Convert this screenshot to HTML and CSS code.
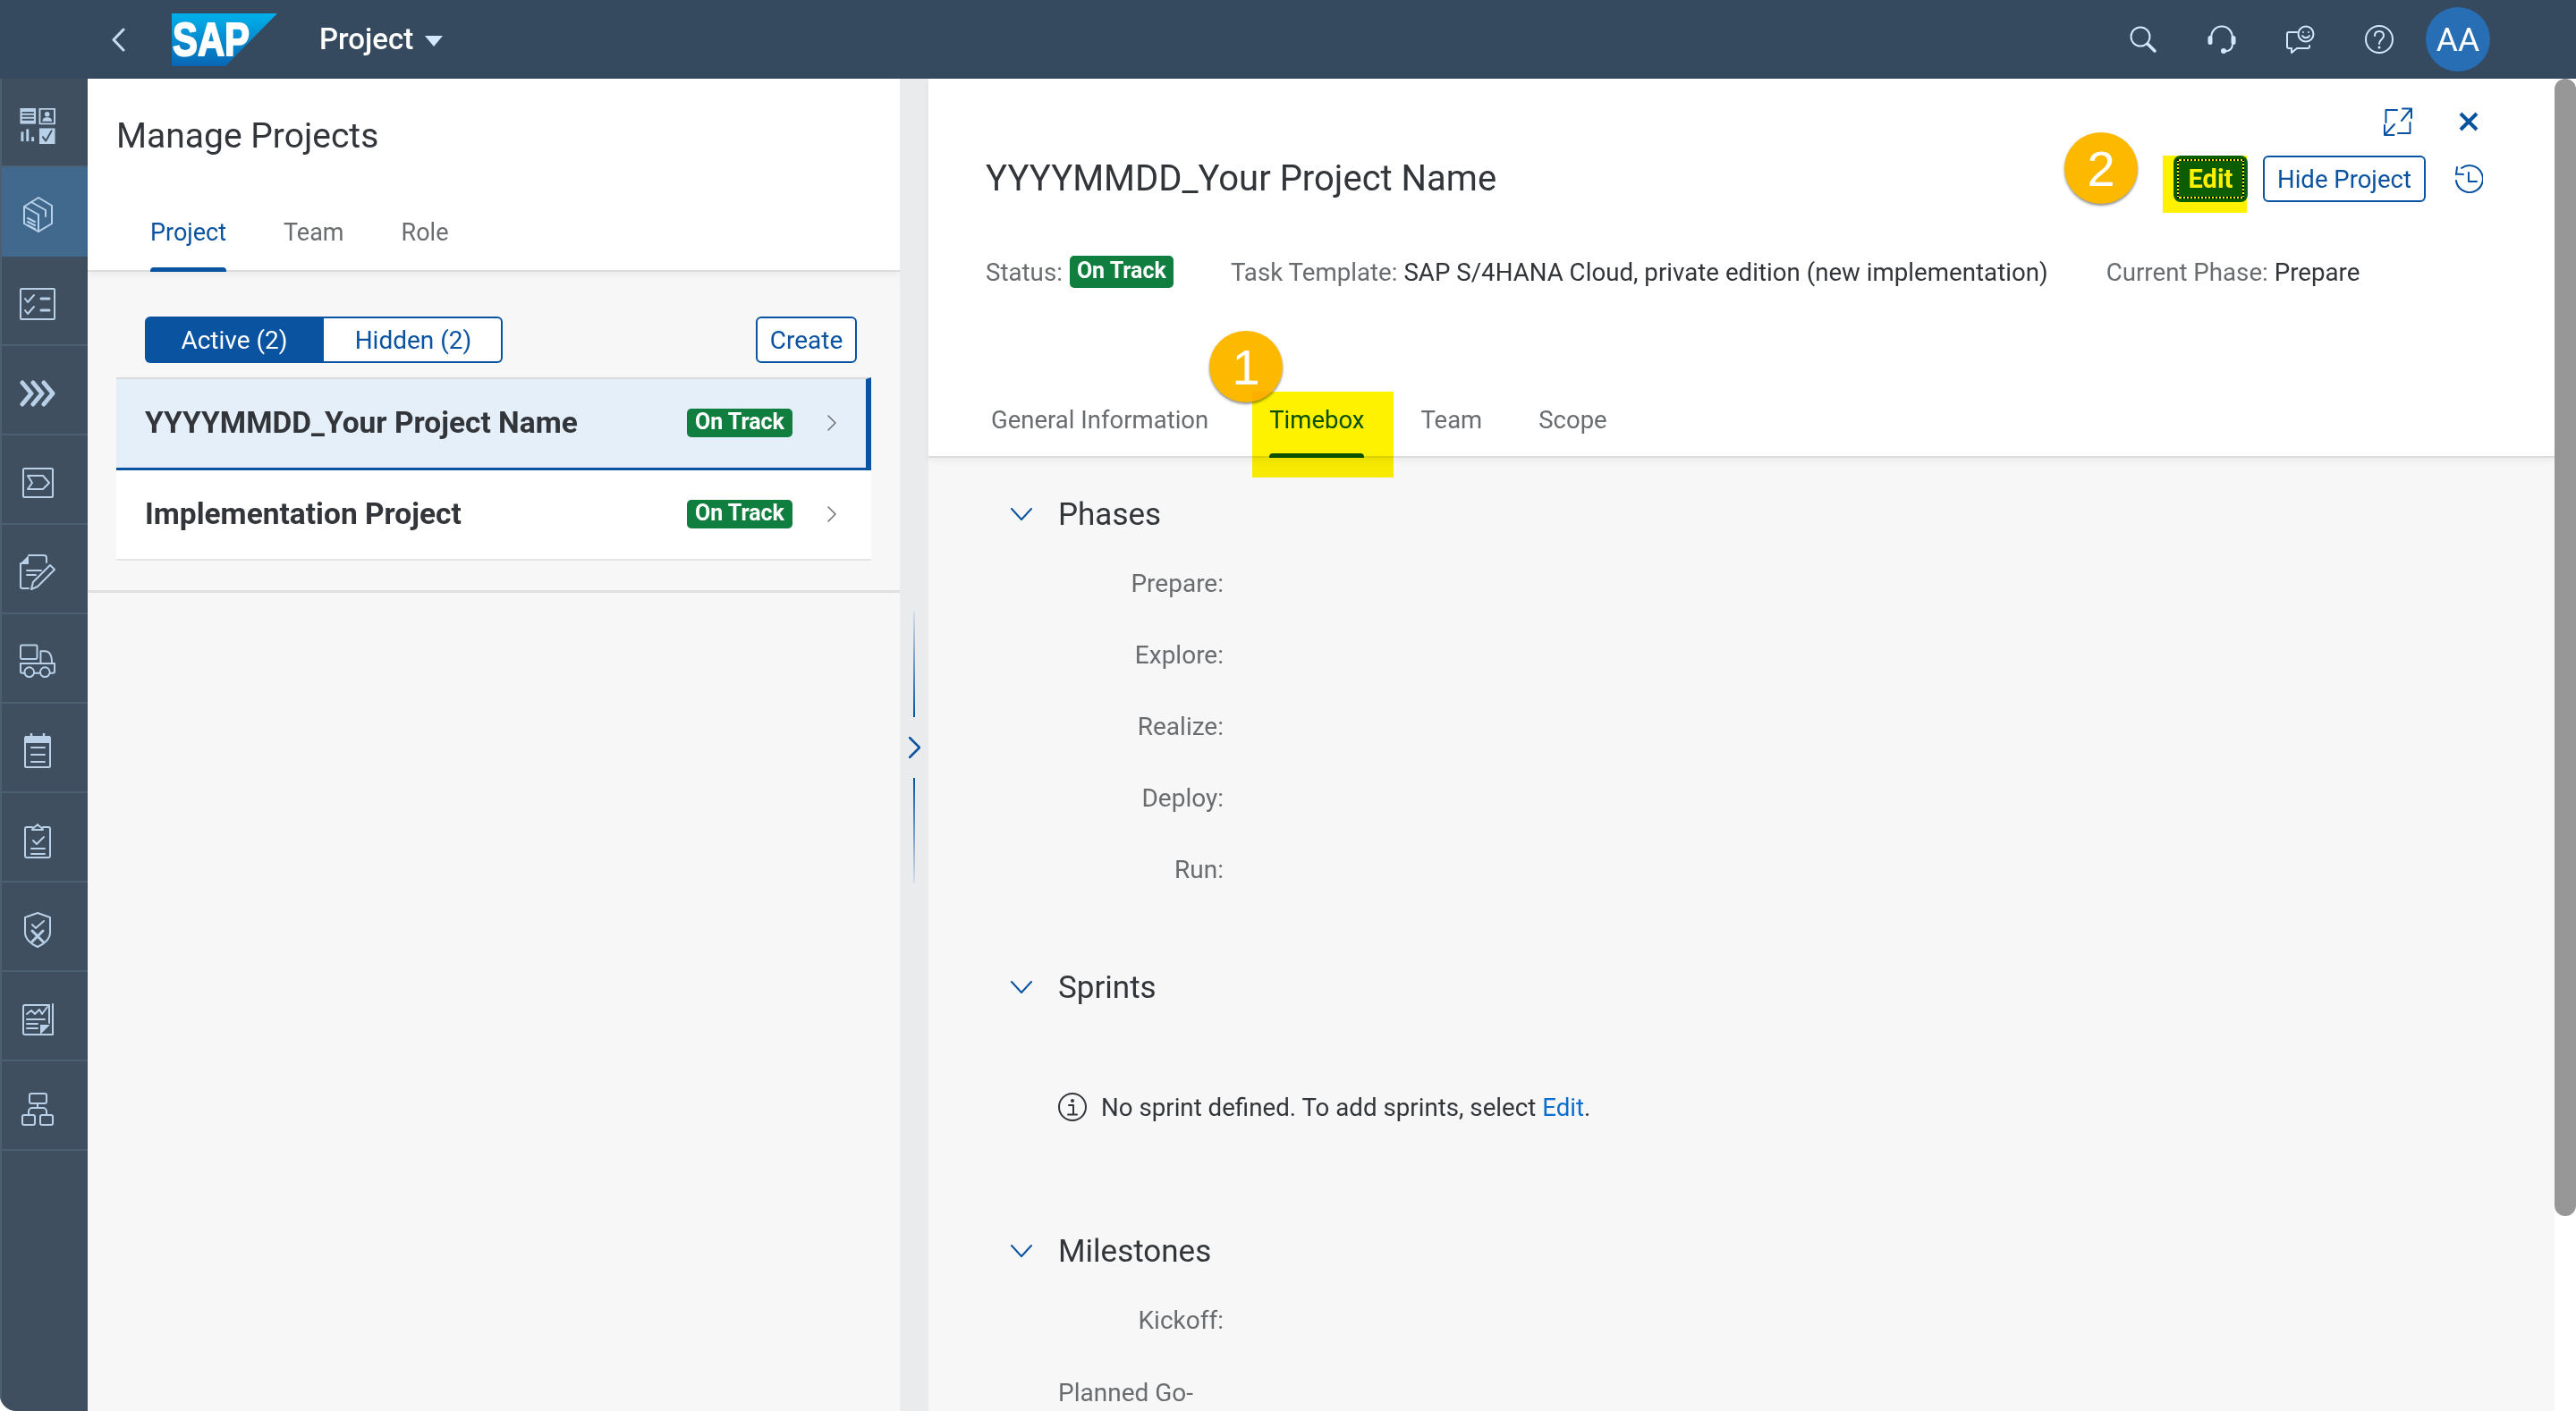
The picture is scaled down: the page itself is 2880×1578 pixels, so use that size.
FILE: index.html
```html
<!DOCTYPE html>
<html lang="en">
<head>
<meta charset="utf-8">
<title>Manage Projects</title>
<link rel="stylesheet" href="styles.css">
</head>
<body>
<div class="app">
  <header class="shell">
    <svg class="back" viewBox="0 0 16 27"><path d="M14 2 3 13.5 14 25"/></svg>
    <svg class="logo" viewBox="0 0 118 59">
      <defs><linearGradient id="sapg" x1="0" y1="0" x2="0" y2="1"><stop offset="0" stop-color="#00b1eb"/><stop offset="1" stop-color="#0a66b5"/></linearGradient></defs>
      <polygon points="0,0 118,0 60,59 0,59" fill="url(#sapg)"/>
      <text x="1" y="47" class="logo-text" textLength="86" lengthAdjust="spacingAndGlyphs">SAP</text>
    </svg>
    <div class="shell-title">Project</div>
    <div class="caret"></div>
    <div class="shell-actions">
      <svg class="shell-icon" viewBox="0 0 32 32"><circle cx="13" cy="13" r="10.5"/><path d="M21 21l8 8" class="thick"/></svg>
      <svg class="shell-icon" viewBox="0 0 32 32"><path d="M4 15C4 7 9 1.500 16 1.500S28 7 28 15M28 21c0 5-3 8-8 8.500"/><rect x="0.500" y="12" width="5" height="10" rx="2.500" class="solid"/><rect x="26.500" y="12" width="5" height="10" rx="2.500" class="solid"/><circle cx="18" cy="29" r="3" class="solid"/></svg>
      <svg class="shell-icon" viewBox="0 0 32 32"><path d="M12 8H3a2 2 0 0 0-2 2v14a2 2 0 0 0 2 2h3v5l6-5h12a2 2 0 0 0 2-2v-1"/><circle cx="22" cy="10" r="8.500"/><circle cx="19" cy="8" r="1" class="solid"/><circle cx="25" cy="8" r="1" class="solid"/><path d="M18 12c2 3 6 3 8 0"/></svg>
      <svg class="shell-icon" viewBox="0 0 32 32"><circle cx="16" cy="16" r="15"/><path d="M11 12c0-3 2-5 5-5s5 2 5 5c0 4-5 4-5 9"/><circle cx="16" cy="25" r="1.500" class="solid"/></svg>
      <div class="avatar">AA</div>
    </div>
  </header>

  <div class="workspace">
    <nav class="sidenav">
      <div class="nav-item first"><svg viewBox="0 0 40 41">
        <rect x="0" y="0" width="18" height="18" class="fill"/><path d="M3 5h12M3 9h12M3 13h12" class="knock"/>
        <rect x="22.500" y="0.800" width="17" height="17"/><circle cx="31" cy="7" r="2.800" class="fill"/><path d="M25.500 15c0-3 2.500-4.500 5.500-4.500s5.500 1.500 5.500 4.500z" class="fill"/>
        <rect x="1" y="27" width="3" height="11" class="fill"/><rect x="7" y="24" width="3" height="14" class="fill"/><rect x="13" y="33" width="3" height="5" class="fill"/>
        <rect x="22" y="23" width="18" height="18" class="fill"/><path d="M26 33l3.500 4.500L36 26" class="knock"/>
      </svg></div>
      <div class="nav-item selected"><svg viewBox="0 0 40 40"><path d="M21 1l15 9v20l-15 9-16-9V11z"/><path d="M5 11l16 9v19M13 6l16 9v7"/><path d="M9 24l8 4M9 28l8 4M9 32l8 4"/></svg></div>
      <div class="nav-item"><svg viewBox="0 0 40 40"><rect x="1" y="3" width="38" height="34" rx="1"/><path d="M6 14l3 4 7-8M6 27l3 4 7-8"/><path d="M24 14h9M24 27h9" class="thick"/></svg></div>
      <div class="nav-item"><svg viewBox="0 0 40 40"><path d="M3 8l10 12L3 32M15 8l10 12-10 12M27 8l10 12-10 12" class="heavy"/></svg></div>
      <div class="nav-item"><svg viewBox="0 0 40 40"><rect x="4" y="4" width="33" height="32" rx="1.500"/><path d="M9 12h17l7 8-7 7H9l5-7z"/></svg></div>
      <div class="nav-item"><svg viewBox="0 0 40 40"><path d="M10 1L1 10v1h9z" class="fill"/><path d="M10 1h17a3 3 0 0 1 3 3v5M1 10v26a2 2 0 0 0 2 2h7M8 18h16M8 23h10"/><path d="M15 31L34 12l5 5-19 19-7 3z"/></svg></div>
      <div class="nav-item"><svg viewBox="0 0 41 40"><rect x="1" y="1" width="19" height="16" rx="1.500"/><path d="M24 8h5c5 0 8 5 8 14H24z"/><path d="M6 33H3a2 2 0 0 1-2-2v-9h39v9a2 2 0 0 1-2 2h-3M17 33h6"/><circle cx="11" cy="32" r="5.500"/><circle cx="29" cy="32" r="5.500"/></svg></div>
      <div class="nav-item"><svg viewBox="0 0 40 40"><rect x="6" y="4" width="28" height="34" rx="1.500"/><rect x="6" y="3" width="28" height="8" class="fill"/><path d="M13 0v7M27 0v7" class="knock-thin"/><path d="M13 16h15M13 24h15M13 32h15"/></svg></div>
      <div class="nav-item"><svg viewBox="0 0 40 40"><path d="M14 5H8a2 2 0 0 0-2 2v30a2 2 0 0 0 2 2h24a2 2 0 0 0 2-2V7a2 2 0 0 0-2-2h-6"/><path d="M14 8c0-3 3-2 6-6 3 4 6 3 6 6z"/><path d="M15 20l4 4 8-8M13 29h15M13 35h15"/></svg></div>
      <div class="nav-item"><svg viewBox="0 0 40 40"><path d="M20 1l14 5v17c0 7-7 13-14 16-7-3-14-9-14-16V6z"/><path d="M14 14l4 4 9-8"/><path d="M14 21l12 12M26 21L14 33" class="thick"/></svg></div>
      <div class="nav-item"><svg viewBox="0 0 40 40"><path d="M33 37H6a2 2 0 0 1-2-2V6a2 2 0 0 1 2-2h27v20"/><path d="M37 3v34h-4"/><path d="M8 14l5-4 4 4 5-5 3 5 6-8M8 20h20M8 25h12M8 30h12"/><path d="M23 37V26h11z" class="fill"/></svg></div>
      <div class="nav-item"><svg viewBox="0 0 40 40"><rect x="11" y="3" width="19" height="11" rx="2"/><path d="M20 14v5M10 27v-4a4 4 0 0 1 4-4h12a4 4 0 0 1 4 4v4"/><rect x="3" y="27" width="14" height="11" rx="2"/><rect x="23" y="27" width="14" height="11" rx="2"/></svg></div>
    </nav>

    <section class="master">
      <div class="master-head">
        <h1 class="master-title">Manage Projects</h1>
        <div class="tabs master-tabs">
          <div class="tab active">Project</div>
          <div class="tab">Team</div>
          <div class="tab">Role</div>
        </div>
      </div>
      <div class="master-body">
        <div class="toolbar">
          <div class="segmented">
            <div class="seg seg-on">Active (2)</div>
            <div class="seg seg-off">Hidden (2)</div>
          </div>
          <button class="btn btn-create">Create</button>
        </div>
        <div class="list">
          <div class="row row-selected">
            <span class="row-name">YYYYMMDD_Your Project Name</span>
            <span class="badge badge-row">On Track</span>
            <svg class="row-chevron" viewBox="0 0 10 18"><path d="M1 1l8 8-8 8"/></svg>
          </div>
          <div class="row">
            <span class="row-name">Implementation Project</span>
            <span class="badge badge-row">On Track</span>
            <svg class="row-chevron" viewBox="0 0 10 18"><path d="M1 1l8 8-8 8"/></svg>
          </div>
        </div>
      </div>
    </section>

    <div class="splitter">
      <div class="grip grip-up"></div>
      <svg class="split-chevron" viewBox="0 0 13 24"><path d="M1 1l11 11L1 23"/></svg>
      <div class="grip grip-down"></div>
    </div>

    <main class="detail">
      <div class="detail-scroll">
        <div class="detail-head">
          <div class="head-icons">
            <svg class="blue-icon" viewBox="0 0 32 32"><path d="M15 3H2.500v14M29.500 17v12H16M21 1.500h10v10.500M31 1.500L20 15M11.500 31H1V20M1 31l11-12"/></svg>
            <svg class="blue-icon close-icon" viewBox="0 0 22 22"><path d="M2 2l18 18M20 2L2 20"/></svg>
          </div>
          <div class="title-row">
            <h2 class="detail-title">YYYYMMDD_Your Project Name</h2>
            <div class="title-actions">
              <button class="btn btn-edit"><span class="btn-focus">Edit</span></button>
              <button class="btn btn-hide">Hide Project</button>
              <svg class="blue-icon history" viewBox="0 0 32 32"><path d="M8 4a15 15 0 1 1-6 14"/><path d="M2 11l1-8M2 10.500l8 0.500"/><path d="M16 9v10h9"/></svg>
            </div>
          </div>
          <div class="meta">
            <span class="meta-item meta-status"><span class="meta-label">Status:</span><span class="badge">On Track</span></span>
            <span class="meta-item meta-template"><span class="meta-label">Task Template:</span> SAP S/4HANA Cloud, private edition (new implementation)</span>
            <span class="meta-item meta-phase"><span class="meta-label">Current Phase:</span> Prepare</span>
          </div>
          <div class="tabs detail-tabs">
            <div class="tab">General Information</div>
            <div class="tab active">Timebox</div>
            <div class="tab">Team</div>
            <div class="tab">Scope</div>
          </div>
        </div>
        <div class="detail-body">
          <div class="section-head first-section"><svg class="sec-chevron" viewBox="0 0 24 14"><path d="M1 1l11 12L23 1"/></svg>Phases</div>
          <div class="field">Prepare:</div>
          <div class="field">Explore:</div>
          <div class="field">Realize:</div>
          <div class="field">Deploy:</div>
          <div class="field">Run:</div>
          <div class="section-head sprints-section"><svg class="sec-chevron" viewBox="0 0 24 14"><path d="M1 1l11 12L23 1"/></svg>Sprints</div>
          <div class="info-row">
            <svg class="info-icon" viewBox="0 0 32 32"><circle cx="16" cy="16" r="15"/><circle cx="16" cy="9" r="2" class="solid"/><path d="M12 14h5v10M11 24.500h10"/></svg>
            <span>No sprint defined. To add sprints, select <a class="link">Edit</a>.</span>
          </div>
          <div class="section-head milestones-section"><svg class="sec-chevron" viewBox="0 0 24 14"><path d="M1 1l11 12L23 1"/></svg>Milestones</div>
          <div class="field">Kickoff:</div>
          <div class="field field-wrap">Planned Go-<br>Live:</div>
        </div>
      </div>
      <div class="scrollbar"><div class="thumb"></div></div>
    </main>
  </div>

  <div class="step step-one">1</div>
  <div class="step step-two">2</div>
  <div class="mark mark-tab"></div>
  <div class="mark mark-edit"></div>
</div>
</body>
</html>
```

FILE: styles.css
```css
* { box-sizing: border-box; }
html, body { margin: 0; height: 100%; background: #fff; }
body { font-family: Roboto, "Noto Sans", sans-serif; font-size: 28px; color: #32363a; overflow: hidden; }
h1, h2 { margin: 0; font-weight: 400; }
svg { display: block; flex: none; fill: none; stroke-linecap: round; stroke-linejoin: round; }

.app { position: relative; height: 1578px; display: flex; flex-direction: column; overflow: hidden; border-radius: 0 0 18px 18px; }

/* shell */
.shell { flex: none; height: 88px; background: #354a5f; display: flex; align-items: center; color: #fff; padding-left: 124px; }
.back { width: 16px; height: 27px; stroke: #c6dcf2; stroke-width: 3; fill: none; }
.logo { width: 118px; height: 59px; margin-left: 52px; }
.logo-text { font-family: "Liberation Sans", sans-serif; font-weight: 700; font-size: 52px; fill: #fff; stroke: #fff; stroke-width: 2; }
.shell-title { margin-left: 47px; font-size: 33px; font-weight: 500; color: #fff; line-height: 40px; }
.caret { margin-left: 13px; margin-top: 3px; width: 0; height: 0; border-left: 10px solid transparent; border-right: 10px solid transparent; border-top: 12px solid #d1e8ff; }
.shell-actions { margin-left: auto; margin-right: 96px; display: flex; align-items: center; gap: 56px; }
.shell-icon { width: 32px; height: 32px; stroke: #d1e8ff; stroke-width: 2; }
.shell-icon .thick { stroke-width: 3.500; }
.shell-icon .solid { fill: #d1e8ff; stroke: none; }
.avatar { width: 72px; height: 72px; margin-left: -20px; border-radius: 50%; background: #286eb4; color: #fff; font-size: 37px; display: flex; align-items: center; justify-content: center; }

.workspace { flex: 1; min-height: 0; display: flex; }

/* side navigation */
.sidenav { flex: none; width: 98px; background: #3f4f5f; border-left: 2px solid #4b5f71; display: flex; flex-direction: column; }
.nav-item { height: 100px; flex: none; padding: 8px 0 0 20px; display: flex; align-items: center; border-bottom: 2px solid #4b6073; }
.nav-item.first { height: 99px; }
.nav-item.selected { background: #41698d; border-bottom-color: #41698d; }
.nav-item svg { width: 40px; height: 40px; stroke: #b8d0e8; stroke-width: 2; }
.nav-item .fill { fill: #b8d0e8; stroke: none; }
.nav-item .knock { stroke: #3f4f5f; stroke-width: 2; }
.nav-item .knock-thin { stroke: #b8d0e8; stroke-width: 2.500; }
.nav-item .thick { stroke-width: 3; }
.nav-item .heavy { stroke-width: 5; }

/* tabs */
.tabs { display: flex; align-items: stretch; }
.tab { position: relative; font-size: 27px; color: #6a6d70; display: flex; flex-direction: column; justify-content: flex-end; line-height: 36px; padding: 0 6px; }
.tab::after { content: ""; display: block; margin-top: 21px; height: 5px; border-radius: 4px 4px 0 0; background: transparent; margin-left: -6px; margin-right: -6px; }
.tab.active { color: #0a53a0; }
.tab.active::after { background: #0a53a0; margin-left: 0; margin-right: 0; }

/* master column */
.master { flex: none; width: 908px; display: flex; flex-direction: column; background: #f7f7f7; }
.master-head { flex: none; height: 216px; background: #fff; border-bottom: 2px solid #dcdcdc; box-shadow: 0 4px 8px rgba(0,0,0,.05); display: flex; flex-direction: column; justify-content: space-between; padding-left: 32px; }
.master-title { margin-top: 40px; font-size: 39px; line-height: 48px; color: #32363a; }
.master-tabs { margin-left: 32px; gap: 52px; margin-bottom: -2px; }
.master-body { padding: 50px 32px 33px; border-bottom: 3px solid #e0e0e0; }
.toolbar { display: flex; justify-content: space-between; padding: 0 16px 0 32px; margin-bottom: 16px; }
.segmented { display: flex; height: 52px; }
.seg { display: flex; align-items: center; justify-content: center; font-size: 28px; }
.seg-on { width: 200px; background: #0a53a0; color: #fff; border-radius: 6px 0 0 6px; }
.seg-off { width: 200px; background: #fff; color: #0a53a0; border: 2px solid #0a53a0; border-left: 0; border-radius: 0 6px 6px 0; padding-left: 2px; }
.btn { font: inherit; font-size: 28px; height: 52px; padding: 0; border-radius: 6px; border: 2px solid #0a53a0; background: #fff; color: #0a53a0; display: flex; align-items: center; justify-content: center; }
.btn-create { width: 113px; }
.list { background: #fff; }
.row { height: 101px; display: flex; align-items: center; padding: 0 39px 2px 32px; background: #fff; border-bottom: 2px solid #e5e5e5; }
.row-name { flex: 1; font-size: 33.500px; font-weight: 700; color: #32363a; }
.row-selected { height: 104px; background: #e5eff9; border-top: 2px solid #dcdcdc; border-bottom: 3px solid #0a53a0; border-right: 6px solid #0a53a0; padding-right: 33px; }
.badge { display: inline-flex; align-items: center; justify-content: center; width: 116px; height: 36px; border-radius: 5px; background: #107e3e; color: #fff; font-size: 25px; font-weight: 700; line-height: 1; padding-bottom: 3px; }
.badge-row { width: 118px; height: 32px; }
.row-chevron { width: 10px; height: 18px; margin-left: 39px; stroke: #6a6d70; stroke-width: 1.500; }

/* splitter */
.splitter { flex: none; width: 32px; background: #e9ebed; display: flex; flex-direction: column; align-items: center; padding-top: 596px; }
.grip { width: 2px; height: 118px; flex: none; }
.grip-up { background: linear-gradient(to bottom, rgba(10,83,160,.08), #0a53a0); }
.grip-down { background: linear-gradient(to top, rgba(10,83,160,.08), #0a53a0); }
.split-chevron { width: 13px; height: 24px; margin: 22px 0; stroke: #0a53a0; stroke-width: 2.500; }

/* detail */
.detail { flex: 1; min-width: 0; display: flex; background: #fff; }
.detail-scroll { flex: 1; min-width: 0; display: flex; flex-direction: column; background: #f7f7f7; }
.scrollbar { flex: none; width: 24px; background: #fff; }
.thumb { height: 1272px; background: #979797; border-radius: 12px; }
.detail-head { flex: none; height: 424px; background: #fff; border-bottom: 2px solid #dcdcdc; box-shadow: 0 4px 8px rgba(0,0,0,.05); padding: 32px 80px 0 64px; display: flex; flex-direction: column; }
.head-icons { display: flex; justify-content: flex-end; align-items: center; height: 32px; gap: 52px; padding-right: 5px; }
.blue-icon { width: 32px; height: 32px; stroke: #0a53a0; stroke-width: 2; }
.close-icon { width: 22px; height: 22px; stroke-width: 4; stroke-linecap: butt; }
.title-row { margin-top: 22px; display: flex; align-items: center; justify-content: space-between; height: 52px; }
.detail-title { font-size: 40px; line-height: 52px; color: #32363a; }
.title-actions { display: flex; align-items: center; }
.btn-edit { width: 83px; background: #0c62a8; color: #fff; font-size: 29px; font-weight: 700; border: 0; border-radius: 8px; padding: 4px; }
.btn-focus { flex: 1; height: 100%; display: flex; align-items: center; justify-content: center; border: 2px solid #fff; outline: 2px dotted #000; outline-offset: -2px; }
.btn-hide { width: 182px; margin-left: 17px; font-size: 27.500px; }
.history { margin-left: 32px; }
.meta { margin-top: 60px; height: 36px; display: flex; align-items: center; font-size: 27.700px; color: #32363a; white-space: nowrap; }
.meta-label { color: #6a6d70; }
.meta-status { display: flex; align-items: center; gap: 8px; }
.meta-template { margin-left: 64px; }
.meta-phase { margin-left: 65px; }
.detail-tabs { margin-top: auto; margin-bottom: -2px; gap: 51px; }
.detail-tabs .tab { font-size: 27.500px; }
.detail-tabs .tab::after { margin-top: 19px; }
.detail-tabs .tab.active { margin-left: 5px; }

.detail-body { flex: 1; min-height: 0; padding-left: 92px; overflow: hidden; }
.section-head { display: flex; align-items: center; height: 48px; font-size: 35px; color: #32363a; }
.sec-chevron { width: 24px; height: 14px; margin-right: 29px; stroke: #0a53a0; stroke-width: 2; }
.first-section { margin-top: 39px; margin-bottom: 13px; }
.sprints-section { margin-top: 68px; }
.milestones-section { margin-top: 112px; margin-bottom: 13px; }
.field { width: 238px; height: 80px; display: flex; align-items: center; justify-content: flex-end; color: #6a6d70; font-size: 28px; }
.field-wrap { display: block; text-align: left; padding-left: 53px; height: auto; width: 300px; padding-top: 24px; line-height: 36px; }
.info-row { margin-top: 85px; margin-left: 53px; height: 50px; display: flex; align-items: center; gap: 16px; font-size: 27.700px; color: #32363a; }
.info-icon { width: 32px; height: 32px; stroke: #32363a; stroke-width: 2; }
.info-icon .solid { fill: #32363a; stroke: none; }
.link { color: #0a6ed1; }

/* annotations laid over the screenshot */
.step { position: absolute; width: 82px; height: 80px; border-radius: 50%; background: #fdb900; color: #fff; font-family: "Liberation Sans", sans-serif; font-size: 56px; display: flex; align-items: center; justify-content: center; box-shadow: 0 2px 3px rgba(0,0,0,.45); }
.step-one { left: 1352px; top: 370px; }
.step-two { left: 2308px; top: 148px; }
.mark { position: absolute; background: #fff200; mix-blend-mode: multiply; }
.mark-tab { left: 1400px; top: 438px; width: 158px; height: 96px; }
.mark-edit { left: 2418px; top: 174px; width: 94px; height: 64px; }
```
